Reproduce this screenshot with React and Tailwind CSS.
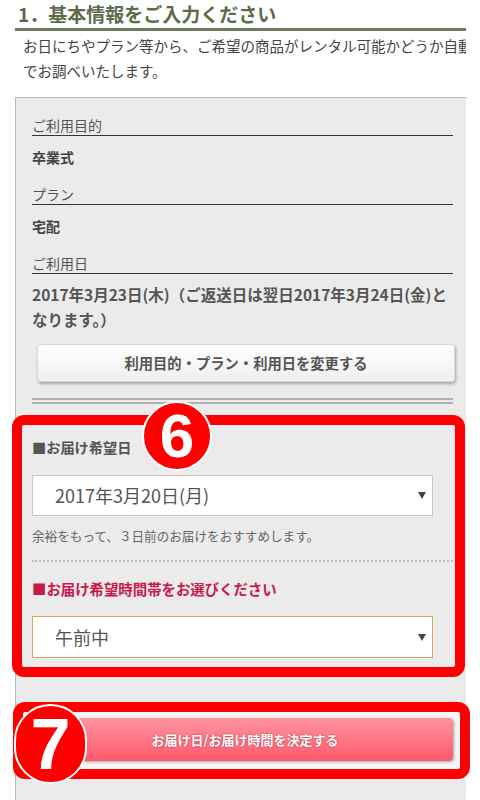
import React from 'react';

const jp = "font-['Noto_Sans_CJK_JP','Noto_Sans',sans-serif]";

const SelectArrow = () => (
  <svg width="8" height="7" viewBox="0 0 8 7" className="shrink-0">
    <path d="M0 0 H8 L4 7 Z" fill="#444" />
  </svg>
);

const Badge = ({ n, className }) => (
  <div
    className={`absolute flex items-center justify-center rounded-full bg-[#ff0000] border-2 border-white text-white font-bold font-['Liberation_Sans',sans-serif] ${className}`}
  >
    {n}
  </div>
);

const InfoRow = ({ label, value, first }) => (
  <div className={first ? '' : 'mt-[17px]'}>
    <div className="text-[14px] leading-[20px] text-[#555] border-b border-[#333]">{label}</div>
    <div className="mt-[11px] text-[14px] leading-[20px] font-bold text-[#444]">{value}</div>
  </div>
);

export default function App() {
  return (
    <div className={`w-[480px] h-[800px] overflow-hidden bg-white ${jp}`}>
      {/* heading */}
      <div className="ml-[15px] w-[451px] border-b-[3px] border-[#6f7b5e]">
        <div className="pl-[3px] text-[19px] leading-[28px] font-bold text-[#5d6b4c]">1．基本情報をご入力ください</div>
      </div>
      <div className="mt-[2px] ml-[23px] w-[443px] overflow-hidden whitespace-nowrap text-[14.5px] leading-[25px] text-[#444]">
        <div>お日にちやプラン等から、ご希望の商品がレンタル可能かどうか自動</div>
        <div>でお調べいたします。</div>
      </div>

      {/* panel */}
      <div className="mt-[14px] ml-[15px] w-[451px] border-t border-l border-[#bbb] bg-[#ebebeb] pl-[16px] pr-[13px] pt-[17px] pb-[40px]">
        <InfoRow first label="ご利用目的" value="卒業式" />
        <InfoRow label="プラン" value="宅配" />
        <div className="mt-[17px]">
          <div className="text-[14px] leading-[20px] text-[#555] border-b border-[#333]">ご利用日</div>
          <div className="mt-[8px] text-[15.5px] leading-[25px] font-bold text-[#555]">
            2017年3月23日(木)（ご返送日は翌日2017年3月24日(金)と
            <br />
            なります。）
          </div>
        </div>

        <button className="mt-[12px] ml-[5px] w-[418px] h-[38px] rounded-[4px] border border-[#d8d8d8] bg-gradient-to-b from-white to-[#efefef] shadow-[1px_2px_3px_rgba(0,0,0,0.3)] text-[14.3px] font-bold text-[#555]">
          利用目的・プラン・利用日を変更する
        </button>

        <div className="mt-[16px] h-[6px] border-y-2 border-[#b0b0b0]" />

        {/* delivery date block */}
        <div className="relative mt-[11px] -ml-[20px] -mr-[12px] border-[10px] border-[#ff0000] rounded-[12px] pl-[10px] pr-[2px] pt-[12px] pb-[9px]">
          <Badge n="6" className="left-[120px] -top-[24px] w-[70px] h-[70px] text-[62px] leading-none" />
          <div className="text-[14.2px] leading-[20px] font-bold text-[#555]">■お届け希望日</div>
          <div className="mt-[18px] w-[401px] h-[41px] bg-white border border-[#c8c8c8] flex items-center pl-[22px] pr-[6px]">
            <span className="flex-1 text-[18px] text-[#555]">2017年3月20日(月)</span>
            <SelectArrow />
          </div>
          <div className="mt-[10px] text-[12.6px] leading-[20px] text-[#666]">余裕をもって、３日前のお届けをおすすめします。</div>
          <div className="mt-[14px] border-t-2 border-dotted border-[#bdbdbd]" />
          <div className="mt-[17px] text-[14.4px] leading-[20px] font-bold text-[#c8174a]">■お届け希望時間帯をお選びください</div>
          <div className="mt-[17px] w-[401px] h-[42px] bg-white border-[1.5px] border-[#d2aa5a] flex items-center pl-[22px] pr-[6px]">
            <span className="flex-1 text-[18px] text-[#555]">午前中</span>
            <SelectArrow />
          </div>
        </div>

        {/* submit block */}
        <div className="relative mt-[25px] -ml-[19px] -mr-[17px] border-[10px] border-[#ff0000] rounded-[12px] bg-[#f7f7f7] pl-[14px] pr-[7px] pt-[6px] pb-[8px]">
          <button className="w-[416px] h-[43px] rounded-[4px] bg-gradient-to-b from-[#ff939e] to-[#ff576c] shadow-[1px_1px_3px_rgba(0,0,0,0.35)] text-[13px] font-bold text-white [text-shadow:0_0_2px_rgba(120,0,20,0.6)]">
            お届け日/お届け時間を決定する
          </button>
          <Badge n="7" className="-left-[9px] -top-[8px] w-[73px] h-[80px] text-[72px] leading-none" />
        </div>
      </div>
    </div>
  );
}
